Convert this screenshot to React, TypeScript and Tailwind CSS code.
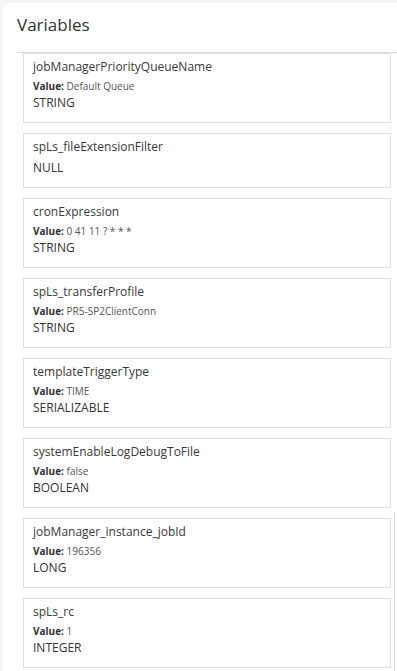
const variables = [
  { name: "jobManagerPriorityQueueName", value: "Default Queue", type: "STRING" },
  { name: "spLs_fileExtensionFilter", value: null, type: "NULL" },
  { name: "cronExpression", value: "0 41 11 ? * * *", type: "STRING" },
  { name: "spLs_transferProfile", value: "PR5-SP2ClientConn", type: "STRING" },
  { name: "templateTriggerType", value: "TIME", type: "SERIALIZABLE" },
  { name: "systemEnableLogDebugToFile", value: "false", type: "BOOLEAN" },
  { name: "jobManager_instance_jobId", value: "196356", type: "LONG" },
  { name: "spLs_rc", value: "1", type: "INTEGER" },
];

const App = () => {
  return (
    <div
      className="h-[671px] overflow-hidden bg-[#f3f4f6] pl-[3px] pt-[3px] text-[#333]"
      style={{ fontFamily: '"Open Sans", "Liberation Sans", sans-serif' }}
    >
      <div className="relative h-full rounded-tl-lg bg-white">
        {/* Header */}
        <div className="h-[49px] pl-[14px] pt-[8px] text-[17px] leading-[28px] text-[#333]">
          Variables
        </div>

        {/* List */}
        <div className="ml-[14px] border-t border-[#dcdcdc] pl-[6px]">
          <div className="flex w-[368px] flex-col gap-[10px]">
            {variables.map((v) => (
              <div
                key={v.name}
                className="border border-[#dedede] pb-[11px] pl-[9px] pt-[4px]"
              >
                <div className="text-[12px] leading-[18px] text-[#3a3a3a]">
                  {v.name}
                </div>
                {v.value !== null && (
                  <div className="mt-[3px] text-[10px] leading-[14px] text-[#555]">
                    <span className="font-bold text-[#333]">Value:</span> {v.value}
                  </div>
                )}
                <div
                  className={
                    v.value !== null
                      ? "mt-[2px] text-[12px] leading-[16px] text-[#333]"
                      : "mt-[4px] text-[12px] leading-[16px] text-[#333]"
                  }
                >
                  {v.type}
                </div>
              </div>
            ))}
          </div>
        </div>

        {/* scrollbar edge */}
        <div className="absolute bottom-0 left-[391px] top-[510px] w-px bg-[#d9d9d9]" />
      </div>
    </div>
  );
};

export default App;
